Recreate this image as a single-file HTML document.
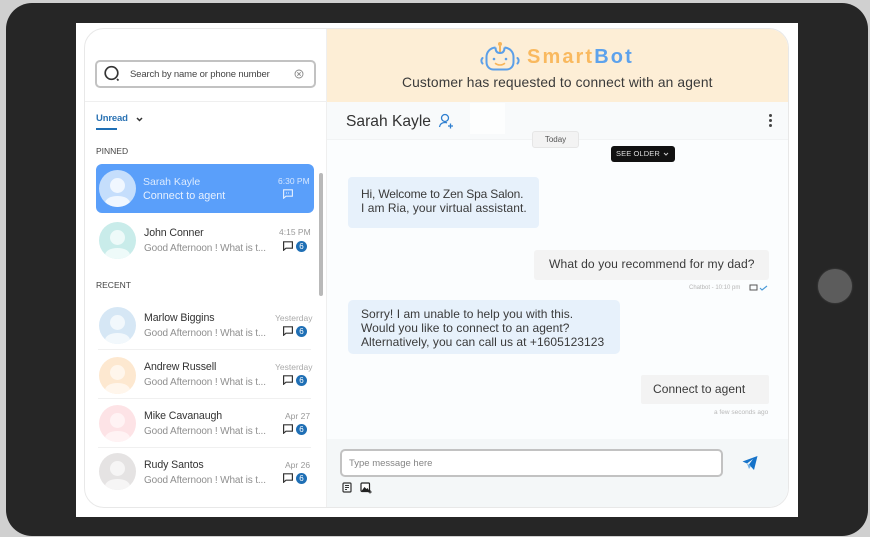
<!DOCTYPE html>
<html><head><meta charset="utf-8">
<style>
*{box-sizing:border-box;margin:0;padding:0}
html,body{width:870px;height:537px;overflow:hidden;background:#d0d0d0;font-family:"Liberation Sans",sans-serif}
.a{position:absolute}
.t{position:absolute;white-space:nowrap}
.av{position:absolute;left:99px;width:37px;height:37px;border-radius:50%;overflow:hidden}
.av i{position:absolute;left:11px;top:8px;width:15px;height:15px;border-radius:50%}
.av b{position:absolute;left:6px;top:26px;width:25px;height:14px;border-radius:50%}
.nm{font-size:10.6px;color:#333;left:144px;letter-spacing:-.1px;line-height:14px}
.pv{font-size:10px;color:#8f8f8f;left:144px;letter-spacing:-.13px;line-height:13px}
.tm{font-size:8.5px;line-height:11px;color:#999}
.ic{position:absolute;left:283px;width:10px;height:10px}
.bd{position:absolute;left:296px;width:11px;height:11px;border-radius:50%;background:#1f6fb5;color:#fff;font-size:8px;line-height:11px;text-align:center}
.sep{position:absolute;left:98px;width:213px;height:1px;background:#f0f0f0}
.msg{font-size:12px;color:#3a3a3a;line-height:14px;letter-spacing:.05px}
</style></head><body>
<div class="a" style="left:6px;top:3px;width:862px;height:533px;background:#262626;border-radius:26px"></div>
<div class="a" style="left:818px;top:269px;width:34px;height:34px;border-radius:50%;background:#5c5c5c;box-shadow:0 0 2px #4a4a4a"></div>
<div class="a" style="left:76px;top:23px;width:722px;height:494px;background:#fff"></div>
<div class="a" style="left:84px;top:28px;width:705px;height:480px;border:1px solid #e8e8e8;border-radius:20px;background:#fff;overflow:hidden">
  <div class="a" style="left:242px;top:0;width:463px;height:73px;background:#fdeed6"></div>
  <div class="a" style="left:242px;top:73px;width:463px;height:337px;background:#fbfdfe"></div>
  <div class="a" style="left:242px;top:73px;width:463px;height:38px;background:#f8fafb"></div>
  <div class="a" style="left:242px;top:110px;width:463px;height:1px;background:#f1f3f4"></div>
  <div class="a" style="left:242px;top:410px;width:463px;height:70px;background:#f4f7f8"></div>
  <div class="a" style="left:241px;top:0;width:1px;height:480px;background:#efefef"></div>
  <div class="a" style="left:0;top:72px;width:241px;height:1px;background:#efefef"></div>
</div>
<div class="a" style="left:470px;top:103px;width:35px;height:31px;background:#fdfefe"></div>

<!-- search -->
<div class="a" style="left:95px;top:60px;width:221px;height:28px;border:2px solid #c2c2c2;border-radius:5px;background:#fff"></div>
<svg class="a" style="left:103px;top:65px" width="18" height="18" viewBox="0 0 18 18" fill="none" stroke="#333" stroke-width="1.7"><circle cx="8.500" cy="8" r="6.300"/><path d="M14 14l1.500 1.500"/></svg>
<div class="t" style="left:130px;top:69px;font-size:9.500px;line-height:12px;color:#444;letter-spacing:-.15px">Search by name or phone number</div>
<svg class="a" style="left:294px;top:69px" width="10" height="10" viewBox="0 0 10 10" fill="none" stroke="#888" stroke-width=".9"><circle cx="5" cy="5" r="4"/><path d="M3.300 3.300l3.400 3.400M6.700 3.300l-3.400 3.400"/></svg>

<div class="t" style="left:96px;top:112px;font-size:9.500px;line-height:13px;font-weight:bold;color:#2b73b4;letter-spacing:-.15px">Unread</div>
<div class="a" style="left:96px;top:127.500px;width:21px;height:2px;background:#1f6fb5"></div>
<svg class="a" style="left:136px;top:117px" width="7" height="5" viewBox="0 0 7 5" fill="none" stroke="#333" stroke-width="1.500"><path d="M1 1l2.500 2.500L6 1"/></svg>
<div class="t" style="left:96px;top:146px;font-size:8.500px;line-height:11px;color:#444">PINNED</div>

<div class="a" style="left:319px;top:173px;width:4px;height:123px;background:#b9b9b9;border-radius:2px"></div>

<!-- Sarah -->
<div class="a" style="left:96px;top:164px;width:218px;height:49px;background:#5a9ffa;border-radius:6px"></div>
<div class="av" style="top:170px;background:#c5defc"><i style="background:#f0f7ff"></i><b style="background:#f0f7ff"></b></div>
<div class="t" style="left:143px;top:174.500px;font-size:10.500px;line-height:14px;color:#dcebff">Sarah Kayle</div>
<div class="t" style="left:143px;top:188.500px;font-size:10.800px;line-height:14px;color:#e6f0ff">Connect to agent</div>
<div class="t" style="left:278px;top:176px;font-size:8.500px;line-height:11px;color:#d6e7ff">6:30 PM</div>
<svg class="a" style="left:283px;top:189px" width="10" height="10" viewBox="0 0 10 10" fill="none" stroke="#e6f0ff" stroke-width="1.100"><path d="M.6.8h8.800v6.400H3L.6 9.200z"/><path d="M3 4h4" stroke-dasharray="1 1"/></svg>

<!-- John -->
<div class="av" style="top:222px;background:#c9ecea"><i style="background:#eefaf9"></i><b style="background:#eefaf9"></b></div>
<div class="t nm" style="top:225.500px">John Conner</div>
<div class="t pv" style="top:242px">Good Afternoon ! What is t...</div>
<div class="t tm" style="left:279px;top:227px">4:15 PM</div>
<svg class="ic" style="top:241px" viewBox="0 0 10 10" fill="none" stroke="#333" stroke-width="1.200"><path d="M.6.8h8.800v6.400H3L.6 9.200z"/></svg>
<div class="bd" style="top:241px">6</div>

<div class="t" style="left:96px;top:280px;font-size:8.500px;line-height:11px;color:#444">RECENT</div>

<!-- Marlow -->
<div class="av" style="top:307px;background:#d6e7f5"><i style="background:#f2f8fc"></i><b style="background:#f2f8fc"></b></div>
<div class="t nm" style="top:310.500px">Marlow Biggins</div>
<div class="t pv" style="top:327px">Good Afternoon ! What is t...</div>
<div class="t tm" style="left:275px;top:313px;color:#aaa">Yesterday</div>
<svg class="ic" style="top:326px" viewBox="0 0 10 10" fill="none" stroke="#333" stroke-width="1.200"><path d="M.6.8h8.800v6.400H3L.6 9.200z"/></svg>
<div class="bd" style="top:326px">6</div>
<div class="sep" style="top:349px"></div>

<!-- Andrew -->
<div class="av" style="top:357px;background:#fde8d0"><i style="background:#fff6ec"></i><b style="background:#fff6ec"></b></div>
<div class="t nm" style="top:359.500px">Andrew Russell</div>
<div class="t pv" style="top:376px">Good Afternoon ! What is t...</div>
<div class="t tm" style="left:275px;top:362px;color:#aaa">Yesterday</div>
<svg class="ic" style="top:375px" viewBox="0 0 10 10" fill="none" stroke="#333" stroke-width="1.200"><path d="M.6.8h8.800v6.400H3L.6 9.200z"/></svg>
<div class="bd" style="top:375px">6</div>
<div class="sep" style="top:398px"></div>

<!-- Mike -->
<div class="av" style="top:405px;background:#fde3e6"><i style="background:#fff3f4"></i><b style="background:#fff3f4"></b></div>
<div class="t nm" style="top:408.500px">Mike Cavanaugh</div>
<div class="t pv" style="top:425px">Good Afternoon ! What is t...</div>
<div class="t tm" style="left:285px;top:411px">Apr 27</div>
<svg class="ic" style="top:424px" viewBox="0 0 10 10" fill="none" stroke="#333" stroke-width="1.200"><path d="M.6.8h8.800v6.400H3L.6 9.200z"/></svg>
<div class="bd" style="top:424px">6</div>
<div class="sep" style="top:447px"></div>

<!-- Rudy -->
<div class="av" style="top:453px;background:#e5e3e3"><i style="background:#f6f5f5"></i><b style="background:#f6f5f5"></b></div>
<div class="t nm" style="top:457.500px">Rudy Santos</div>
<div class="t pv" style="top:474px">Good Afternoon ! What is t...</div>
<div class="t tm" style="left:285px;top:460px">Apr 26</div>
<svg class="ic" style="top:473px" viewBox="0 0 10 10" fill="none" stroke="#333" stroke-width="1.200"><path d="M.6.8h8.800v6.400H3L.6 9.200z"/></svg>
<div class="bd" style="top:473px">6</div>

<!-- banner -->
<svg class="a" style="left:480px;top:40px" width="40" height="32" viewBox="0 0 40 32" fill="none">
<circle cx="20" cy="4" r="2" fill="#f7b55a"/>
<path d="M20 6v6" stroke="#f7b55a" stroke-width="2"/>
<path d="M15.500 7.500C10 8 6.500 12 6.500 17v5c0 4.500 3 7.500 7 7.500h13c4 0 7-3 7-7.500v-5c0-5-3.500-9-9-9.500" stroke="#5b9fe8" stroke-width="2"/>
<path d="M15.500 7.500c0 3.500 1.500 5.500 4.500 5.500s4.500-2 4.500-5.500" stroke="#5b9fe8" stroke-width="2"/>
<path d="M2.500 18c-1.500 1.500-1.500 4 0 5.500M37.500 18c1.500 1.500 1.500 4 0 5.500" stroke="#5b9fe8" stroke-width="2" stroke-linecap="round"/>
<circle cx="14" cy="19" r="1.300" fill="#5b9fe8"/><circle cx="26" cy="19" r="1.300" fill="#5b9fe8"/>
<path d="M15.500 23.500c2.500 2 6.500 2 9 0" stroke="#f7b55a" stroke-width="1.600" stroke-linecap="round"/>
</svg>
<div class="t" style="left:527px;top:45px;font-size:20px;line-height:25px;font-weight:bold;letter-spacing:2.100px;color:#f9b95f">Smart<span style="color:#5da2ec">Bot</span></div>
<div class="t" style="left:402px;top:75px;font-size:13.800px;line-height:16px;color:#3a3a3a;letter-spacing:.13px">Customer has requested to connect with an agent</div>

<!-- chat header -->
<div class="t" style="left:346px;top:111.500px;font-size:15.600px;line-height:20px;color:#333">Sarah Kayle</div>
<svg class="a" style="left:438px;top:113px" width="16" height="16" viewBox="0 0 16 16" fill="none" stroke="#2f7fd0" stroke-width="1.300"><circle cx="7" cy="5" r="3.500"/><path d="M1.500 14c.5-3 2.500-4.500 5.500-4.500 1 0 1.500.2 2 .4"/><path d="M10 13h5M12.500 10.500v5"/></svg>
<div class="a" style="left:769px;top:114px;width:3px;height:3px;border-radius:50%;background:#444;box-shadow:0 5px 0 #444,0 10px 0 #444"></div>
<div class="a" style="left:532px;top:131px;width:47px;height:17px;background:#f3f3f3;border:1px solid #e6e6e6;border-radius:3px;font-size:8px;line-height:15px;text-align:center;color:#555">Today</div>
<div class="a" style="left:611px;top:146px;width:64px;height:16px;background:#111;border-radius:3px;font-size:7.500px;line-height:16px;color:#ddd;padding-left:5px;letter-spacing:.1px">SEE OLDER</div>
<svg class="a" style="left:663px;top:152px" width="6" height="4" viewBox="0 0 6 4" fill="none" stroke="#ccc" stroke-width="1"><path d="M1 1l2 2 2-2"/></svg>

<!-- messages -->
<div class="a" style="left:348px;top:177px;width:191px;height:51px;background:#e7f1fb;border-radius:4px"></div>
<div class="t msg" style="left:361px;top:187px"><span style="letter-spacing:-.17px">Hi, Welcome to Zen Spa Salon.</span><br>I am Ria, your virtual assistant.</div>

<div class="a" style="left:534px;top:250px;width:235px;height:30px;background:#f3f3f3;border-radius:3px"></div>
<div class="t msg" style="left:549px;top:257px;font-size:12.100px;line-height:15px;letter-spacing:.1px">What do you recommend for my dad?</div>
<div class="t" style="left:689px;top:284px;font-size:6px;line-height:9px;color:#b5b5b5">Chatbot - 10:10 pm</div>
<svg class="a" style="left:749px;top:284px" width="9" height="8" viewBox="0 0 9 8" fill="none" stroke="#555" stroke-width="1"><rect x="1" y="1" width="7" height="5"/></svg>
<svg class="a" style="left:759px;top:285px" width="9" height="6" viewBox="0 0 9 6" fill="none" stroke="#4a9ad8" stroke-width="1.200"><path d="M1 3l2 2 5-4"/></svg>

<div class="a" style="left:348px;top:300px;width:272px;height:54px;background:#e7f1fb;border-radius:5px"></div>
<div class="t msg" style="left:361px;top:307px">Sorry! I am unable to help you with this.<br>Would you like to connect to an agent?<br>Alternatively, you can call us at +1605123123</div>

<div class="a" style="left:641px;top:375px;width:128px;height:29px;background:#f3f3f3;border-radius:2px"></div>
<div class="t msg" style="left:653px;top:382px;font-size:12px;line-height:15px">Connect to agent</div>
<div class="t" style="left:714px;top:408px;font-size:6.500px;line-height:9px;color:#b9b9b9">a few seconds ago</div>

<!-- composer -->
<div class="a" style="left:340px;top:449px;width:383px;height:28px;background:#fff;border:2px solid #c2c2c2;border-radius:5px"></div>
<div class="t" style="left:349px;top:457.500px;font-size:9.500px;line-height:12px;color:#858585">Type message here</div>
<svg class="a" style="left:742px;top:455px" width="16" height="16" viewBox="0 0 16 16"><path d="M15.500 1L.5 6.500l4.500 2 6-4.500-4 5.500L12 15z" fill="#1673c9"/><path d="M5 8.500l2 5.500 2-3z" fill="#6fb0e6"/></svg>
<svg class="a" style="left:342px;top:482px" width="10" height="11" viewBox="0 0 10 11" fill="none" stroke="#333" stroke-width="1.200"><rect x="1" y="1" width="8" height="9" rx="1"/><path d="M3 3.500h4M3 5.500h4M3 7.500h2" stroke-width=".9"/></svg>
<svg class="a" style="left:360px;top:482px" width="12" height="12" viewBox="0 0 12 12"><rect x="1" y="1" width="8.500" height="8.500" rx="1" fill="#fff" stroke="#222" stroke-width="1.200"/><path d="M1.500 9l3-4 2 2 1-1 2 3z" fill="#222"/><path d="M10 8v3.500M8.300 10h3.400" stroke="#222" stroke-width="1"/></svg>
</body></html>
